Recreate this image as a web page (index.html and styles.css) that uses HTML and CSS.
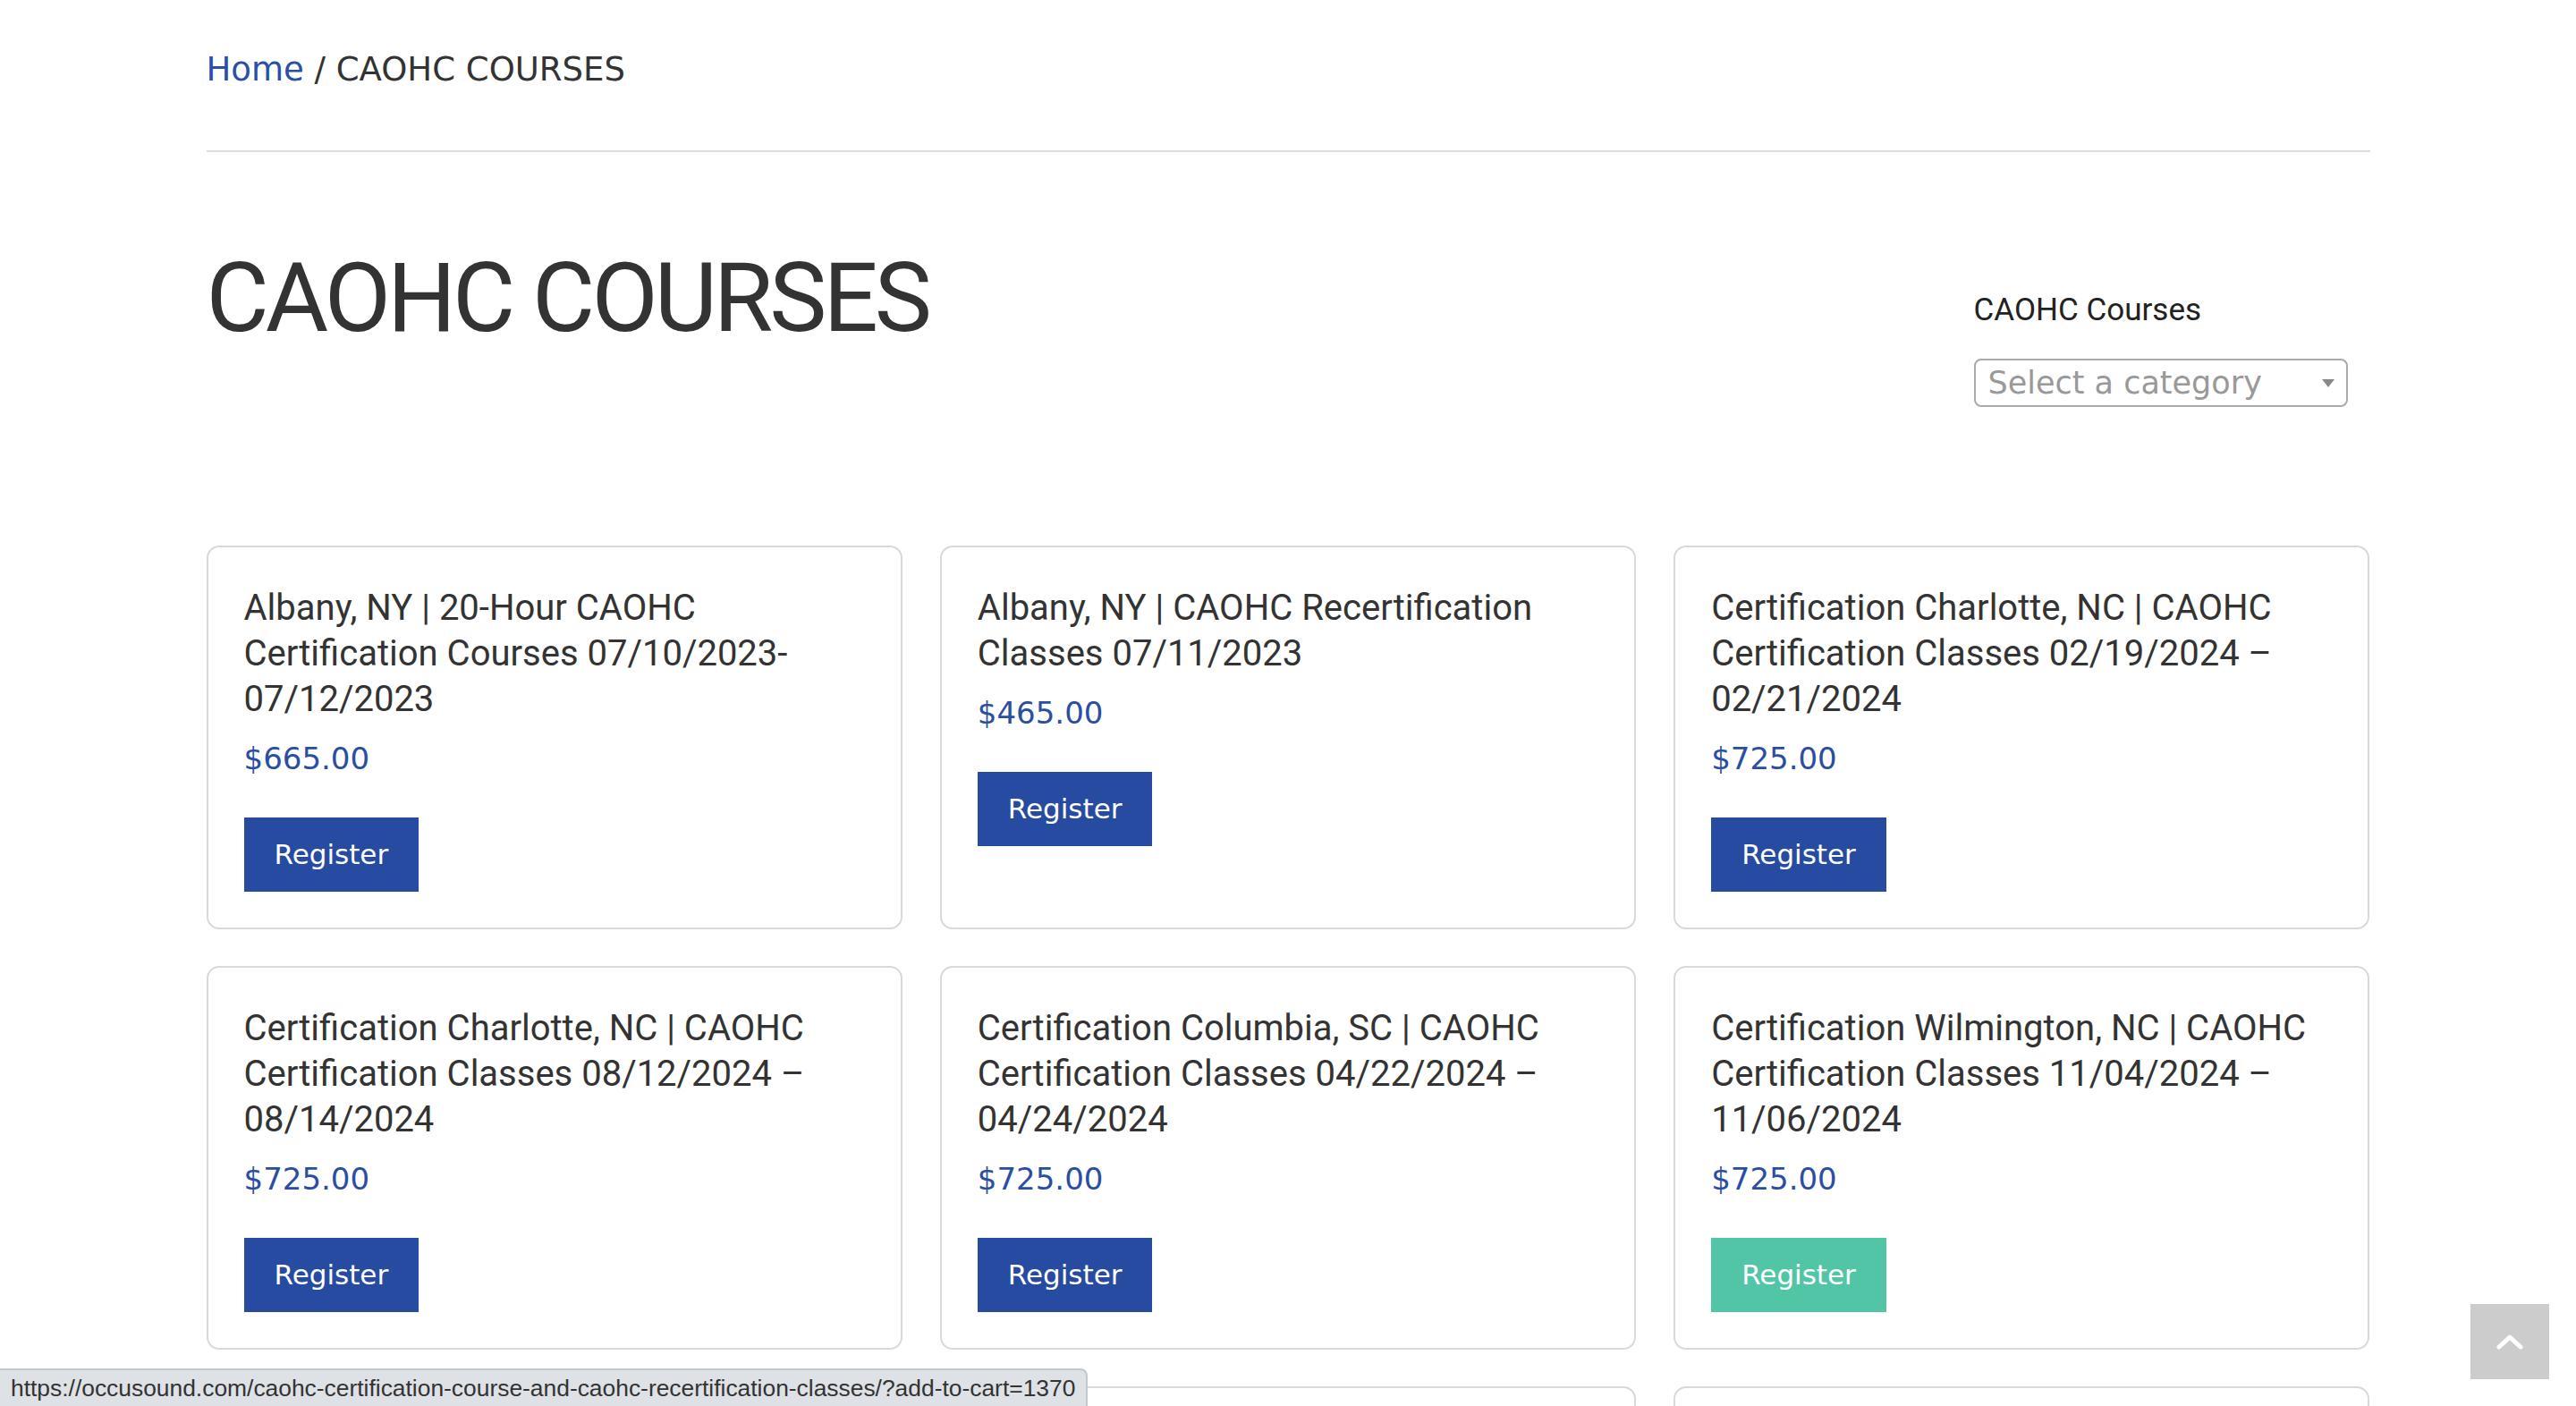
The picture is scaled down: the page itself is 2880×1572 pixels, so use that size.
FILE: index.html
```html
<!DOCTYPE html>
<html lang="en">

<head>
    <meta charset="UTF-8">
    <meta name="viewport" content="width=device-width, initial-scale=1.0">
    <title>CAOHC COURSES</title>
    <link rel="stylesheet" href="styles.css">
</head>

<body>
    <div class="site">
        <nav class="breadcrumb">
            <a href="#" class="breadcrumb_home">Home</a> / CAOHC COURSES
        </nav>

        <div class="intro">
            <h1 class="page_title">CAOHC COURSES</h1>
            <aside class="sidebar">
                <h3 class="widget_title">CAOHC Courses</h3>
                <div class="select_box">
                    <span class="select_text">Select a category</span>
                    <b class="select_arrow"></b>
                </div>
            </aside>
        </div>

        <ul class="products">
            <li class="product">
                <h2 class="product_title">Albany, NY | 20-Hour CAOHC Certification Courses 07/10/2023- 07/12/2023</h2>
                <div class="price">$665.00</div>
                <a href="#" class="button">Register</a>
            </li>
            <li class="product">
                <h2 class="product_title">Albany, NY | CAOHC Recertification Classes 07/11/2023</h2>
                <div class="price">$465.00</div>
                <a href="#" class="button">Register</a>
            </li>
            <li class="product">
                <h2 class="product_title">Certification Charlotte, NC | CAOHC Certification Classes 02/19/2024 – 02/21/2024</h2>
                <div class="price">$725.00</div>
                <a href="#" class="button">Register</a>
            </li>
            <li class="product">
                <h2 class="product_title">Certification Charlotte, NC | CAOHC Certification Classes 08/12/2024 – 08/14/2024</h2>
                <div class="price">$725.00</div>
                <a href="#" class="button">Register</a>
            </li>
            <li class="product">
                <h2 class="product_title">Certification Columbia, SC | CAOHC Certification Classes 04/22/2024 – 04/24/2024</h2>
                <div class="price">$725.00</div>
                <a href="#" class="button">Register</a>
            </li>
            <li class="product">
                <h2 class="product_title">Certification Wilmington, NC | CAOHC Certification Classes 11/04/2024 – 11/06/2024</h2>
                <div class="price">$725.00</div>
                <a href="#" class="button hover">Register</a>
            </li>
            <!-- next row, below the fold -->
            <li class="product product_empty"></li>
            <li class="product product_empty"></li>
            <li class="product product_empty"></li>
        </ul>
    </div>

    <div class="status_bar">https://occusound.com/caohc-certification-course-and-caohc-recertification-classes/?add-to-cart=1370</div>

    <a href="#" class="back_top">
        <svg width="30" height="18" viewBox="0 0 30 18">
            <path d="M3 15 L15 4 L27 15" fill="none" stroke="#fff" stroke-width="5" stroke-linecap="round" stroke-linejoin="round" />
        </svg>
    </a>
</body>

</html>
```

FILE: styles.css
```css
* {
    margin: 0;
    padding: 0;
    box-sizing: border-box;
}

html {
    overflow: hidden;
}

body {
    font-family: "DejaVu Sans", sans-serif;
    color: #333;
    background: #fff;
}

a {
    text-decoration: none;
}

.site {
    width: 2419px;
    margin: 0 auto;
}

/* breadcrumb */
.breadcrumb {
    padding: 50px 0 63px;
    font-size: 37px;
    line-height: 55px;
    color: #333;
    border-bottom: 2px solid #dcdde0;
}

.breadcrumb_home {
    color: #2a4fa8;
}

/* title + sidebar */
.intro {
    display: flex;
    justify-content: space-between;
    align-items: flex-start;
    margin-bottom: 155px;
}

.page_title {
    margin-top: 98px;
    font-family: Roboto, sans-serif;
    font-weight: 400;
    font-size: 108px;
    line-height: 130px;
    letter-spacing: -4px;
    color: #333;
}

.sidebar {
    width: 443px;
    padding-top: 152px;
}

.widget_title {
    font-family: Roboto, sans-serif;
    font-weight: 400;
    font-size: 35px;
    line-height: 50px;
    color: #222;
}

.select_box {
    margin-top: 29px;
    width: 418px;
    height: 54px;
    border: 2px solid #aaa;
    border-radius: 8px;
    display: flex;
    align-items: center;
    padding: 0 13px 0 14px;
}

.select_text {
    font-size: 35px;
    color: #999;
}

.select_arrow {
    margin-left: auto;
    width: 0;
    height: 0;
    border-left: 7px solid transparent;
    border-right: 7px solid transparent;
    border-top: 9px solid #888;
}

/* products */
.products {
    list-style: none;
    display: grid;
    grid-template-columns: repeat(3, 1fr);
    column-gap: 42px;
    row-gap: 41px;
}

.product {
    border: 2px solid #d9d9d9;
    border-radius: 14px;
    padding: 42px 40px 40px;
}

.product_empty {
    min-height: 428px;
}

.product_title {
    font-family: Roboto, sans-serif;
    font-weight: 400;
    font-size: 40px;
    line-height: 51px;
    color: #333;
}

.price {
    margin-top: 16px;
    font-size: 34px;
    line-height: 51px;
    color: #2a4ea3;
}

.button {
    display: block;
    width: max-content;
    margin-top: 40px;
    height: 83px;
    padding: 0 34px;
    line-height: 83px;
    font-size: 31px;
    color: #fff;
    background: #264ba0;
}

.button.hover {
    background: #52c5a6;
}

/* browser hover link */
.status_bar {
    position: fixed;
    left: 0;
    bottom: 0;
    height: 42px;
    padding: 0 12px;
    font-family: "Liberation Sans", Arial, sans-serif;
    font-size: 26.4px;
    line-height: 40px;
    color: #333;
    background: #dee1e6;
    border-top: 2px solid #c4c7cc;
    border-right: 2px solid #c4c7cc;
    border-top-right-radius: 8px;
}

.back_top {
    position: fixed;
    right: 30px;
    bottom: 30px;
    width: 88px;
    height: 84px;
    background: #ccc;
    display: flex;
    align-items: center;
    justify-content: center;
}
```
